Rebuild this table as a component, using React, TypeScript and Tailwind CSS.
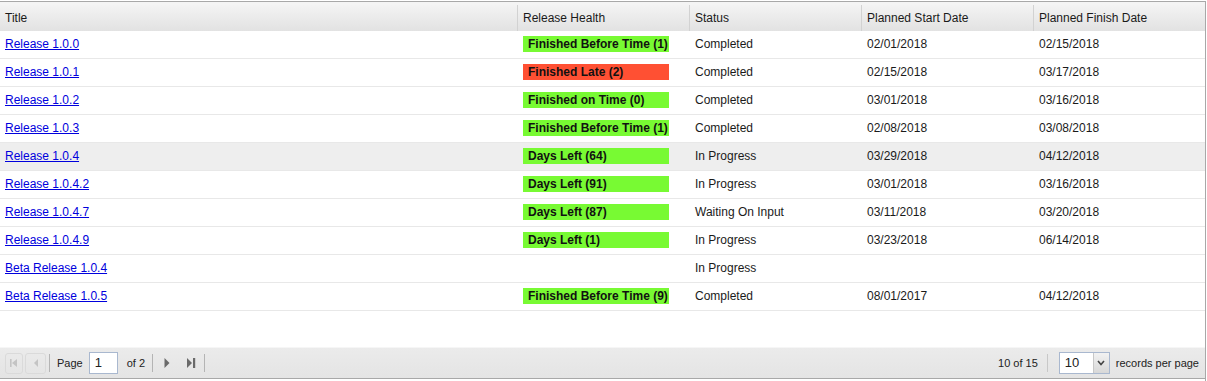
import React from 'react';

type Row = {
  title: string;
  health?: { label: string; late?: boolean };
  status: string;
  start: string;
  finish: string;
  selected?: boolean;
};

const rows: Row[] = [
  { title: 'Release 1.0.0', health: { label: 'Finished Before Time (1)' }, status: 'Completed', start: '02/01/2018', finish: '02/15/2018' },
  { title: 'Release 1.0.1', health: { label: 'Finished Late (2)', late: true }, status: 'Completed', start: '02/15/2018', finish: '03/17/2018' },
  { title: 'Release 1.0.2', health: { label: 'Finished on Time (0)' }, status: 'Completed', start: '03/01/2018', finish: '03/16/2018' },
  { title: 'Release 1.0.3', health: { label: 'Finished Before Time (1)' }, status: 'Completed', start: '02/08/2018', finish: '03/08/2018' },
  { title: 'Release 1.0.4', health: { label: 'Days Left (64)' }, status: 'In Progress', start: '03/29/2018', finish: '04/12/2018', selected: true },
  { title: 'Release 1.0.4.2', health: { label: 'Days Left (91)' }, status: 'In Progress', start: '03/01/2018', finish: '03/16/2018' },
  { title: 'Release 1.0.4.7', health: { label: 'Days Left (87)' }, status: 'Waiting On Input', start: '03/11/2018', finish: '03/20/2018' },
  { title: 'Release 1.0.4.9', health: { label: 'Days Left (1)' }, status: 'In Progress', start: '03/23/2018', finish: '06/14/2018' },
  { title: 'Beta Release 1.0.4', status: 'In Progress', start: '', finish: '' },
  { title: 'Beta Release 1.0.5', health: { label: 'Finished Before Time (9)' }, status: 'Completed', start: '08/01/2017', finish: '04/12/2018' },
];

const cols = 'grid grid-cols-[517px_172px_172px_172px_171px]';

export default function App() {
  return (
    <div className="w-[1207px] h-[381px] bg-white text-[12px] text-[#1a1a1a] flex flex-col pt-px" style={{ fontFamily: '"Liberation Sans", Arial, sans-serif' }}>
      <div className="flex-1 flex flex-col border-t border-r border-[#a8a8a8] mr-px">
        {/* header */}
        <div className={`${cols} h-[29px] border-t-[3px] border-[#f4f4f4] bg-gradient-to-b from-[#f3f3f3] to-[#e2e2e2]`}>
          {['Title', 'Release Health', 'Status', 'Planned Start Date', 'Planned Finish Date'].map((h, i) => (
            <div key={h} className={`flex items-center pl-[5px] ${i > 0 ? 'border-l border-[#d2d2d2]' : ''}`}>
              {h}
            </div>
          ))}
        </div>

        {/* rows */}
        {rows.map((r) => (
          <div key={r.title} className={`${cols} h-[28px] border-b border-[#e8e8e8] pb-[2px] ${r.selected ? 'bg-[#eeeeee]' : ''}`}>
            <div className="flex items-center pl-[5px]">
              <a href="#" className="text-[#0000dd] underline">{r.title}</a>
            </div>
            <div className="flex items-center pl-[6px]">
              {r.health && (
                <span className={`w-[146px] h-[16px] flex items-center pl-[5px] font-bold text-[#111] ${r.health.late ? 'bg-[#ff5033]' : 'bg-[#78fa33]'}`}>
                  {r.health.label}
                </span>
              )}
            </div>
            <div className="flex items-center pl-[6px]">{r.status}</div>
            <div className="flex items-center pl-[6px]">{r.start}</div>
            <div className="flex items-center pl-[6px]">{r.finish}</div>
          </div>
        ))}

        <div className="flex-1" />

        {/* pager */}
        <div className="h-[32px] border-t border-[#f6f6f6] border-b border-b-[#a8a8a8] bg-gradient-to-b from-[#ebebeb] to-[#e4e4e4] flex items-center text-[11px] text-[#222]">
          <div className="flex items-center pl-[5px]">
            <button className="w-[18px] h-[21px] rounded-[3px] border border-[#dadada] flex items-center justify-center">
              <svg width="10" height="10" viewBox="0 0 10 10"><rect x="1" y="1" width="1.6" height="8" fill="#c4c4c4" /><path d="M8 1 L3 5 L8 9 Z" fill="#c4c4c4" /></svg>
            </button>
            <button className="ml-[2px] w-[21px] h-[21px] rounded-[3px] border border-[#dadada] flex items-center justify-center">
              <svg width="8" height="10" viewBox="0 0 8 10"><path d="M6 1 L2 5 L6 9 Z" fill="#c4c4c4" /></svg>
            </button>
            <div className="ml-[3px] w-px h-[18px] bg-[#b4b4b4]" />
            <span className="ml-[7px]">Page</span>
            <div className="ml-[6px] w-[29px] h-[22px] bg-white border border-[#a9b8cf] flex items-center pl-[5px] text-[13px]">1</div>
            <span className="ml-[9px]">of 2</span>
            <div className="ml-[7px] w-px h-[18px] bg-[#b4b4b4]" />
            <button className="ml-[8px] w-[12px] h-[21px] flex items-center justify-center">
              <svg width="8" height="12" viewBox="0 0 8 12"><path d="M1.5 1 L6.5 6 L1.5 11 Z" fill="#6a6a6a" /></svg>
            </button>
            <button className="ml-[11px] w-[14px] h-[21px] flex items-center justify-center">
              <svg width="11" height="12" viewBox="0 0 11 12"><path d="M1 1 L6 6 L1 11 Z" fill="#6a6a6a" /><rect x="7" y="1" width="2.2" height="10" fill="#6a6a6a" /></svg>
            </button>
            <div className="ml-[6px] w-px h-[18px] bg-[#b4b4b4]" />
          </div>
          <div className="ml-auto flex items-center pr-[6px]">
            <span>10 of 15</span>
            <div className="ml-[9px] w-px h-[18px] bg-[#c8c8c8]" />
            <div className="ml-[11px] w-[51px] h-[22px] bg-white border border-[#a9b8cf] flex items-center text-[13px]">
              <span className="pl-[5px] flex-1">10</span>
              <div className="w-[16px] h-[20px] bg-gradient-to-b from-[#f2f2f2] to-[#d8d8d8] border-l border-[#c8c8c8] flex items-center justify-center">
                <svg width="8" height="6" viewBox="0 0 8 6"><path d="M1 1 L4 4.5 L7 1" stroke="#444" strokeWidth="1.6" fill="none" /></svg>
              </div>
            </div>
            <span className="ml-[6px]">records per page</span>
          </div>
        </div>
        <div className="h-[2px]" />
      </div>
    </div>
  );
}
